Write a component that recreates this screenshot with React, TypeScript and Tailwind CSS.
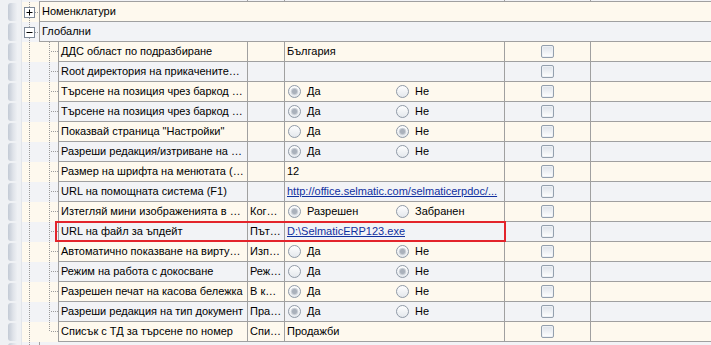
const CREAM = "bg-[#fef9ee]";
const GRAY = "bg-[#f2f3f6]";

type Radio = { a: string; b: string; checked: 0 | 1 };
type Row = {
  name: string;
  col2?: string;
  text?: string;
  link?: string;
  radio?: Radio;
  mark?: boolean;
};

const rows: Row[] = [
  { name: "ДДС област по подразбиране", text: "България" },
  { name: "Root директория на прикачените…" },
  { name: "Търсене на позиция чрез баркод …", radio: { a: "Да", b: "Не", checked: 0 } },
  { name: "Търсене на позиция чрез баркод …", radio: { a: "Да", b: "Не", checked: 0 } },
  { name: 'Показвай страница "Настройки"', radio: { a: "Да", b: "Не", checked: 1 } },
  { name: "Разреши редакция/изтриване на …", radio: { a: "Да", b: "Не", checked: 0 } },
  { name: "Размер на шрифта на менютата (…", text: "12" },
  { name: "URL на помощната система (F1)", link: "http://office.selmatic.com/selmaticerpdoc/..." },
  { name: "Изтегляй мини изображенията в …", col2: "Ког…", radio: { a: "Разрешен", b: "Забранен", checked: 0 } },
  { name: "URL на файл за ъпдейт", col2: "Път…", link: "D:\\SelmaticERP123.exe", mark: true },
  { name: "Автоматично показване на вирту…", col2: "Изп…", radio: { a: "Да", b: "Не", checked: 1 } },
  { name: "Режим на работа с докосване", col2: "Реж…", radio: { a: "Да", b: "Не", checked: 1 } },
  { name: "Разрешен печат на касова бележка", col2: "В к…", radio: { a: "Да", b: "Не", checked: 0 } },
  { name: "Разреши редакция на тип документ", col2: "Пра…", radio: { a: "Да", b: "Не", checked: 0 } },
  { name: "Списък с ТД за търсене по номер", col2: "Спи…", text: "Продажби" },
];

const Indicator = () => (
  <div className="w-[22px] shrink-0 bg-[#eff1f4] border-r border-[#e2e5ea] flex items-center">
    <div className="ml-[8px] w-[10px] h-[18px] rounded-[3px] bg-gradient-to-r from-[#c3cad5] via-[#dfe3e9] to-[#f1f3f6]" />
  </div>
);

const dot = { stroke: "#9a9a9a", strokeDasharray: "1 1", strokeWidth: 1 };

const CategoryTree = ({ open }: { open: boolean }) => (
  <svg width="17" height="20" className="shrink-0 block">
    <line x1="7.5" y1="0" x2="7.5" y2="20" {...dot} />
    <line x1="13" y1="10.5" x2="17" y2="10.5" {...dot} />
    <rect x="2.5" y="5.5" width="10" height="10" fill="#fff" stroke="#7f8a99" />
    <line x1="4.5" y1="10.5" x2="10.5" y2="10.5" stroke="#000" />
    {!open && <line x1="7.5" y1="7.5" x2="7.5" y2="13.5" stroke="#000" />}
  </svg>
);

const ChildTree = ({ last }: { last: boolean }) => (
  <svg width="36" height="20" className="shrink-0 block">
    <line x1="7.5" y1="0" x2="7.5" y2="20" {...dot} />
    <line x1="27.5" y1="0" x2="27.5" y2={last ? 10 : 20} {...dot} />
    <line x1="29" y1="9.5" x2="36" y2="9.5" {...dot} />
  </svg>
);

const RadioDot = ({ on }: { on: boolean }) => (
  <svg width="13" height="13" className="shrink-0">
    <defs>
      <linearGradient id="rg" x1="0" y1="0" x2="0" y2="1">
        <stop offset="0" stopColor="#ffffff" />
        <stop offset="1" stopColor="#e3e7ec" />
      </linearGradient>
    </defs>
    <circle cx="6.5" cy="6.5" r="6" fill="url(#rg)" stroke="#8f99a6" />
    {on && <circle cx="6.5" cy="6.5" r="3.2" fill="#aab1bb" stroke="#cfd4db" />}
  </svg>
);

const Check = () => (
  <div className="w-[13px] h-[13px] rounded-[2px] border border-[#94a0ae] bg-gradient-to-b from-[#dde2e9] to-white shadow-[inset_0_0_0_1px_#eef1f5]" />
);

const cell = "border-l border-[#a0a0a0] shrink-0 h-full flex items-center";

export default function App() {
  return (
    <div className="w-[711px] h-[345px] overflow-hidden bg-[#f2f3f6] text-[11px] text-black font-['Liberation_Sans',Arial,sans-serif] leading-[19px]">
      {/* tail of the row above */}
      <div className="flex h-[2px]">
        <div className="w-[22px] shrink-0 bg-[#eff1f4] border-r border-[#e2e5ea]" />
        <div className={`w-[17px] shrink-0 ${GRAY}`} />
        <div className={`flex flex-1 border-b border-[#a0a0a0] ${GRAY}`}>
          <div className={`${cell} w-[208px] border-l-0`} />
          <div className={`${cell} w-[37px]`} />
          <div className={`${cell} w-[220px]`} />
          <div className={`${cell} w-[86px]`} />
          <div className={`${cell} flex-1`} />
        </div>
      </div>

      {[
        { label: "Номенклатури", open: false, bg: CREAM },
        { label: "Глобални", open: true, bg: GRAY },
      ].map((c) => (
        <div key={c.label} className="flex h-[20px]">
          <Indicator />
          <div className={c.bg}>
            <CategoryTree open={c.open} />
          </div>
          <div className={`flex-1 border-l border-b border-[#a0a0a0] pl-[2px] ${c.bg}`}>{c.label}</div>
        </div>
      ))}

      {rows.map((r, i) => {
        const bg = i % 2 === 0 ? CREAM : GRAY;
        return (
          <div key={i} className="relative flex h-[20px]">
            <Indicator />
            <div className={bg}>
              <ChildTree last={i === rows.length - 1} />
            </div>
            <div className={`flex flex-1 border-b border-[#a0a0a0] ${bg}`}>
              <div className={`${cell} w-[189px] pl-[2px] overflow-hidden whitespace-nowrap`}>{r.name}</div>
              <div className={`${cell} w-[37px] pl-[2px] overflow-hidden whitespace-nowrap`}>{r.col2}</div>
              <div className={`${cell} w-[220px] overflow-hidden whitespace-nowrap`}>
                {r.text && <span className="pl-[2px]">{r.text}</span>}
                {r.link && <span className="pl-[2px] text-[#10309f] underline">{r.link}</span>}
                {r.radio && (
                  <>
                    <div className="w-[108px] pl-[3px] flex items-center gap-[6px]">
                      <RadioDot on={r.radio.checked === 0} />
                      <span>{r.radio.a}</span>
                    </div>
                    <div className="pl-[3px] flex items-center gap-[6px]">
                      <RadioDot on={r.radio.checked === 1} />
                      <span>{r.radio.b}</span>
                    </div>
                  </>
                )}
              </div>
              <div className={`${cell} w-[86px] justify-center`}>
                <Check />
              </div>
              <div className={`${cell} flex-1`} />
            </div>
            {r.mark && (
              <div className="absolute left-[55px] top-[-1px] w-[451px] h-[21px] border-2 border-[#e3242b] pointer-events-none" />
            )}
          </div>
        );
      })}

      {/* head of the next group */}
      <div className="flex h-[20px]">
        <Indicator />
        <div className={GRAY}>
          <svg width="17" height="20" className="block">
            <line x1="7.5" y1="0" x2="7.5" y2="20" {...dot} />
          </svg>
        </div>
        <div className={`flex-1 border-l border-[#a0a0a0] ${GRAY}`} />
      </div>
    </div>
  );
}
